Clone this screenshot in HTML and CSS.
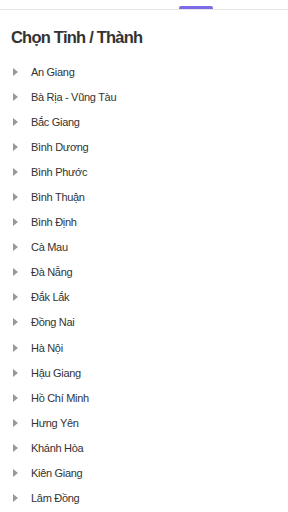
FILE: index.html
```html
<!DOCTYPE html>
<html lang="vi">

<head>
    <meta charset="UTF-8">
    <meta name="viewport" content="width=device-width, initial-scale=1.0">
    <title>Chọn Tỉnh / Thành</title>
    <link rel="stylesheet" href="styles.css">
</head>

<body>
    <div class="topbar">
        <div class="handle"></div>
    </div>
    <div class="container">
        <h1>Chọn Tỉnh / Thành</h1>
        <ul class="list">
            <li>An Giang</li>
            <li>Bà Rịa - Vũng Tàu</li>
            <li>Bắc Giang</li>
            <li>Bình Dương</li>
            <li>Bình Phước</li>
            <li>Bình Thuận</li>
            <li>Bình Định</li>
            <li>Cà Mau</li>
            <li>Đà Nẵng</li>
            <li>Đắk Lắk</li>
            <li>Đồng Nai</li>
            <li>Hà Nội</li>
            <li>Hậu Giang</li>
            <li>Hồ Chí Minh</li>
            <li>Hưng Yên</li>
            <li>Khánh Hòa</li>
            <li>Kiên Giang</li>
            <li>Lâm Đồng</li>
        </ul>
    </div>
</body>

</html>
```

FILE: styles.css
```css
body {
    font-family: 'Liberation Sans', Arial, sans-serif;
    background-color: #fff;
    margin: 0;
    padding: 0;
    overflow: hidden;
}

.topbar {
    height: 9px;
    border-bottom: 1px solid #e6e6e6;
    position: relative;
}

.handle {
    position: absolute;
    left: 179px;
    bottom: 0;
    width: 34px;
    height: 3px;
    background-color: #7b6be6;
    border-radius: 2px 2px 0 0;
}

.container {
    padding: 0 11px;
}

h1 {
    font-size: 16.5px;
    font-weight: bold;
    letter-spacing: -0.8px;
    color: #333;
    margin: 18px 0 12px;
}

.list {
    list-style: none;
    margin: 0;
    padding: 0;
}

.list li {
    display: flex;
    align-items: center;
    height: 25.1px;
    font-size: 11px;
    letter-spacing: -0.3px;
    color: #333;
}

.list li::before {
    content: '';
    width: 0;
    height: 0;
    border-top: 4px solid transparent;
    border-bottom: 4px solid transparent;
    border-left: 5px solid #999;
    margin: 0 13px 0 2px;
}
```
